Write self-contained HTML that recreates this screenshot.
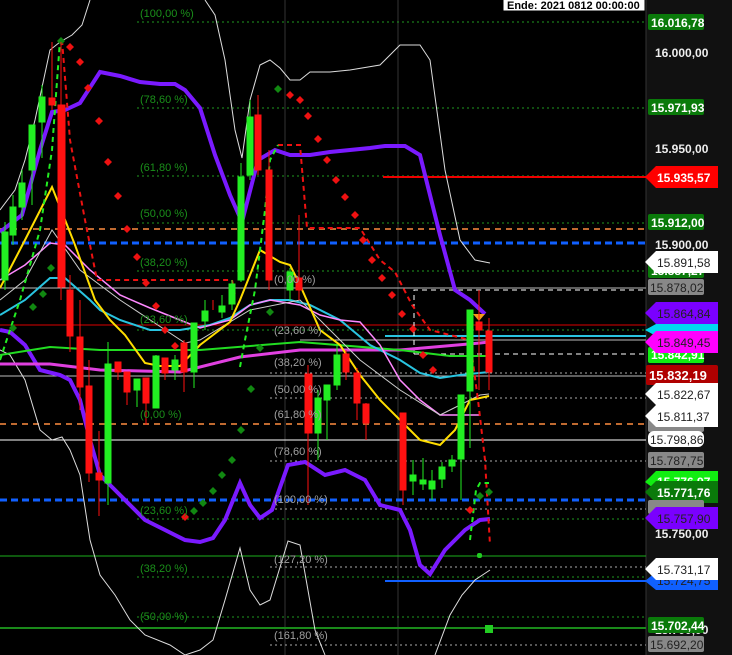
<!DOCTYPE html>
<html><head><meta charset="utf-8"><style>
html,body{margin:0;padding:0;background:#000;}
body{width:732px;height:655px;overflow:hidden;position:relative;font-family:"Liberation Sans",sans-serif;}
svg{position:absolute;left:0;top:0;}
</style></head><body>
<svg width="732" height="655" viewBox="0 0 732 655" xmlns="http://www.w3.org/2000/svg">
<rect x="0" y="0" width="732" height="655" fill="#000"/>
<rect x="646" y="0" width="86" height="655" fill="#111"/>
<line x1="646" y1="0" x2="646" y2="655" stroke="#333" stroke-width="1"/>
<line x1="285" y1="0" x2="285" y2="655" stroke="#333"/>
<line x1="398" y1="0" x2="398" y2="655" stroke="#333"/>

<g stroke-width="1" fill="none">
<g stroke="#1f9a1f" stroke-dasharray="2,3">
<line x1="137" y1="22" x2="646" y2="22"/>
<line x1="137" y1="108" x2="646" y2="108"/>
<line x1="137" y1="176" x2="646" y2="176"/>
<line x1="137" y1="223" x2="646" y2="223"/>
<line x1="137" y1="271" x2="646" y2="271"/>
<line x1="137" y1="330" x2="646" y2="330"/>
<line x1="137" y1="519" x2="646" y2="519"/>
<line x1="137" y1="577" x2="646" y2="577"/>
<line x1="137" y1="617" x2="646" y2="617"/>
</g>
<g stroke="#aaa" stroke-dasharray="2,3">
<line x1="270" y1="373" x2="646" y2="373"/>
<line x1="270" y1="398" x2="646" y2="398"/>
<line x1="270" y1="461" x2="646" y2="461"/>
<line x1="270" y1="509" x2="646" y2="509"/>
<line x1="270" y1="567" x2="646" y2="567"/>
<line x1="270" y1="645" x2="646" y2="645"/>
</g>
<line x1="383" y1="177" x2="646" y2="177" stroke="#e00" stroke-width="2"/>
<line x1="0" y1="229" x2="646" y2="229" stroke="#c06a30" stroke-width="2" stroke-dasharray="6,5"/>
<line x1="0" y1="424" x2="646" y2="424" stroke="#c06a30" stroke-width="2" stroke-dasharray="6,5"/>
<line x1="0" y1="243" x2="646" y2="243" stroke="#1060ff" stroke-width="3" stroke-dasharray="7,4"/>
<line x1="0" y1="500" x2="646" y2="500" stroke="#1060ff" stroke-width="3" stroke-dasharray="7,4"/>
<line x1="0" y1="288" x2="646" y2="288" stroke="#bbb"/>
<line x1="0" y1="325" x2="646" y2="325" stroke="#d00"/>
<line x1="385" y1="336" x2="646" y2="336" stroke="#29c4e0" stroke-width="2"/>
<line x1="300" y1="340" x2="646" y2="340" stroke="#bbb"/>
<line x1="0" y1="376" x2="646" y2="376" stroke="#bbb"/>
<line x1="0" y1="440" x2="646" y2="440" stroke="#fff"/>
<line x1="0" y1="556" x2="646" y2="556" stroke="#1cb01c"/>
<line x1="0" y1="628" x2="646" y2="628" stroke="#1a8a1a" stroke-width="2"/>
<line x1="385" y1="581" x2="646" y2="581" stroke="#1060ff" stroke-width="2"/>
<path d="M414 354 V290 H646 M414 354 H646" stroke="#fff" stroke-dasharray="5,4"/>
</g>

<g fill="none">
<polyline stroke="#ddd" stroke-width="1" points="0,210 15,190 25,160 35,120 50,50 60,42 72,35 82,25 90,0"/>
<polyline stroke="#ddd" stroke-width="1" points="205,0 215,15 225,60 235,130 242,158 250,100 260,65 270,60 280,68 290,80 300,80 310,72 330,72 350,70 380,65 400,45 420,45 430,60 445,170 460,240 475,260 490,263"/>
<polyline stroke="#ddd" stroke-width="1" points="0,350 10,355 25,380 40,430 52,440 62,437 70,450 80,475 90,540 100,575 115,595 130,620 145,635 170,645 185,655 200,650 213,640 225,600 240,548 250,590 260,605 270,600 288,541 300,545 315,630 325,655"/>
<polyline stroke="#ddd" stroke-width="1" points="435,655 450,615 462,595 475,580 490,570"/>
<polyline stroke="#7a1aff" stroke-width="4" points="0,232 22,215 40,150 52,112 65,110 80,103 100,72 120,76 140,82 160,84 175,84 185,90 200,108 215,155 230,195 242,222 258,160 275,150 290,155 310,155 330,152 350,150 370,148 385,146 405,146 420,155 440,235 455,290 470,300 485,314"/>
<polyline stroke="#7a1aff" stroke-width="4" points="0,330 10,332 25,345 40,370 60,375 70,380 80,400 90,440 100,475 115,490 130,505 145,520 165,530 185,540 200,542 213,538 225,520 240,483 250,505 260,518 272,510 288,465 305,462 325,475 345,470 365,480 380,505 400,510 410,530 420,565 430,574 445,550 465,530 480,520 490,519"/>
</g>

<g fill="none">
<polyline stroke="#e040e0" stroke-width="3" points="0,364 50,364 100,370 180,372 240,357 300,350 400,350 480,343 489,342"/>
<polyline stroke="#22dd22" stroke-width="2" points="0,355 50,347 100,350 200,350 300,342 400,350 450,356 489,356"/>
<polyline stroke="#29c4e0" stroke-width="2" points="0,315 25,300 50,278 65,278 90,300 100,310 120,320 150,330 180,330 210,325 230,318 250,305 270,300 290,300 310,305 340,320 370,345 400,360 420,373 440,378 460,375 489,372"/>
<polyline stroke="#ff88ff" stroke-width="1.5" points="0,280 25,265 50,243 65,245 90,270 120,295 150,308 180,320 200,328 230,320 250,305 270,300 300,305 320,315 340,320 360,322 380,345 400,380 420,400 440,415 460,415 480,415"/>
<polyline stroke="#ccc" stroke-width="1" points="0,300 25,280 52,230 80,270 120,300 185,343 200,340 250,310 300,300 330,330 360,360 400,390 440,415 460,405 480,395 489,394"/>
<polyline stroke="#ffdd00" stroke-width="2" points="0,288 25,240 52,187 75,245 95,300 110,320 125,335 145,363 160,366 180,366 200,345 230,322 240,300 260,250 280,262 290,265 300,285 320,330 340,345 360,375 380,400 400,420 420,440 440,445 455,430 470,400 480,398 489,396"/>
</g>

<g fill="none" stroke-width="2" stroke-dasharray="5,4">
<polyline stroke="#ee1111" points="62,40 70,140 85,220 97,280 232,280 235,295"/>
<polyline stroke="#ee1111" points="278,145 300,145 307,228 360,228 380,260 395,272 412,305 430,330 470,340 478,400 485,460 490,545"/>
<polyline stroke="#22ee22" points="0,360 10,330 20,300 40,230 52,150 60,40"/>
<polyline stroke="#22ee22" points="240,367 245,340 255,290 265,210 270,160 278,145"/>
<polyline stroke="#22ee22" points="470,540 476,490 480,483 489,483"/>
</g>
<g fill="#ee1111">
<path d="M70 43l4 4-4 4-4-4z M80 58l4 4-4 4-4-4z M88 84l4 4-4 4-4-4z M99 117l4 4-4 4-4-4z M108 158l4 4-4 4-4-4z M118 192l4 4-4 4-4-4z M127 225l4 4-4 4-4-4z M137 253l4 4-4 4-4-4z M146 279l4 4-4 4-4-4z M156 302l4 4-4 4-4-4z M165 326l4 4-4 4-4-4z M175 342l4 4-4 4-4-4z M185 513l4 4-4 4-4-4z"/>
<path d="M290 91l4 4-4 4-4-4z M300 96l4 4-4 4-4-4z M308 112l4 4-4 4-4-4z M318 135l4 4-4 4-4-4z M327 156l4 4-4 4-4-4z M336 176l4 4-4 4-4-4z M345 193l4 4-4 4-4-4z M355 211l4 4-4 4-4-4z M363 236l4 4-4 4-4-4z M372 256l4 4-4 4-4-4z M382 274l4 4-4 4-4-4z M392 291l4 4-4 4-4-4z M402 310l4 4-4 4-4-4z M413 325l4 4-4 4-4-4z M423 351l4 4-4 4-4-4z M433 366l4 4-4 4-4-4z M470 506l4 4-4 4-4-4z"/>
</g>
<g fill="#118811">
<path d="M61 37l4 4-4 4-4-4z M51 264l4 4-4 4-4-4z M43 290l4 4-4 4-4-4z M33 303l4 4-4 4-4-4z M13 324l4 4-4 4-4-4z M278 85l4 4-4 4-4-4z M270 308l4 4-4 4-4-4z M194 507l4 4-4 4-4-4z M203 499l4 4-4 4-4-4z M213 487l4 4-4 4-4-4z M222 471l4 4-4 4-4-4z M232 456l4 4-4 4-4-4z M241 426l4 4-4 4-4-4z M251 385l4 4-4 4-4-4z M260 344l4 4-4 4-4-4z M480 492l4 4-4 4-4-4z M489 488l4 4-4 4-4-4z"/>
</g>
<path d="M473 314h12l-6 7z" fill="#f59a1a"/>
<rect x="477" y="553" width="5" height="5" rx="2" fill="#22cc22"/>
<rect x="485" y="625" width="8" height="8" fill="#22cc22"/>

<g stroke-width="1">
<g fill="#22ee22" stroke="#22ee22">
<line x1="5" y1="222" x2="5" y2="290"/><rect x="2" y="232" width="6" height="48"/>
<line x1="13" y1="195" x2="13" y2="245"/><rect x="10" y="207" width="6" height="28"/>
<line x1="22" y1="170" x2="22" y2="220"/><rect x="19" y="183" width="6" height="24"/>
<line x1="32" y1="125" x2="32" y2="205"/><rect x="29" y="125" width="6" height="45"/>
<line x1="42" y1="85" x2="42" y2="158"/><rect x="39" y="97" width="6" height="25"/>
<line x1="108" y1="342" x2="108" y2="505"/><rect x="105" y="364" width="6" height="119"/>
<line x1="137" y1="379" x2="137" y2="407"/><rect x="134" y="379" width="6" height="11"/>
<line x1="156" y1="355" x2="156" y2="408"/><rect x="153" y="356" width="6" height="52"/>
<line x1="175" y1="355" x2="175" y2="380"/><rect x="172" y="360" width="6" height="10"/>
<line x1="194" y1="323" x2="194" y2="388"/><rect x="191" y="323" width="6" height="49"/>
<line x1="205" y1="300" x2="205" y2="330"/><rect x="202" y="311" width="6" height="10"/>
<line x1="222" y1="295" x2="222" y2="318"/><rect x="219" y="306" width="6" height="6"/>
<line x1="232" y1="280" x2="232" y2="310"/><rect x="229" y="284" width="6" height="20"/>
<line x1="241" y1="163" x2="241" y2="282"/><rect x="238" y="177" width="6" height="103"/>
<line x1="250" y1="100" x2="250" y2="180"/><rect x="247" y="117" width="6" height="58"/>
<line x1="290" y1="268" x2="290" y2="300"/><rect x="287" y="272" width="6" height="18"/>
<line x1="318" y1="390" x2="318" y2="460"/><rect x="315" y="398" width="6" height="35"/>
<line x1="327" y1="385" x2="327" y2="440"/><rect x="324" y="385" width="6" height="15"/>
<line x1="337" y1="345" x2="337" y2="390"/><rect x="334" y="355" width="6" height="30"/>
<line x1="413" y1="460" x2="413" y2="495"/><rect x="410" y="475" width="6" height="6"/>
<line x1="423" y1="458" x2="423" y2="490"/><rect x="420" y="480" width="6" height="4"/>
<line x1="432" y1="470" x2="432" y2="500"/><rect x="429" y="481" width="6" height="8"/>
<line x1="442" y1="462" x2="442" y2="488"/><rect x="439" y="467" width="6" height="12"/>
<line x1="452" y1="455" x2="452" y2="472"/><rect x="449" y="460" width="6" height="6"/>
<line x1="461" y1="395" x2="461" y2="500"/><rect x="458" y="395" width="6" height="64"/>
<line x1="470" y1="310" x2="470" y2="448"/><rect x="467" y="310" width="6" height="81"/>
</g>
<g fill="#ff1111" stroke="#ff1111">
<line x1="52" y1="42" x2="52" y2="110"/><rect x="49" y="98" width="6" height="7"/>
<line x1="61" y1="42" x2="61" y2="300"/><rect x="58" y="105" width="7" height="182"/>
<line x1="70" y1="275" x2="70" y2="352"/><rect x="67" y="290" width="6" height="46"/>
<line x1="80" y1="300" x2="80" y2="410"/><rect x="77" y="337" width="6" height="50"/>
<line x1="89" y1="360" x2="89" y2="482"/><rect x="86" y="386" width="6" height="87"/>
<line x1="99" y1="431" x2="99" y2="516"/><rect x="96" y="473" width="6" height="7"/>
<line x1="118" y1="362" x2="118" y2="380"/><rect x="115" y="362" width="6" height="10"/>
<line x1="127" y1="372" x2="127" y2="405"/><rect x="124" y="372" width="6" height="20"/>
<line x1="146" y1="378" x2="146" y2="425"/><rect x="143" y="378" width="6" height="25"/>
<line x1="165" y1="358" x2="165" y2="380"/><rect x="162" y="358" width="6" height="15"/>
<line x1="184" y1="340" x2="184" y2="392"/><rect x="181" y="343" width="6" height="29"/>
<line x1="213" y1="300" x2="213" y2="310"/>
<line x1="258" y1="95" x2="258" y2="175"/><rect x="255" y="115" width="6" height="55"/>
<line x1="269" y1="150" x2="269" y2="290"/><rect x="266" y="170" width="6" height="110"/>
<line x1="299" y1="215" x2="299" y2="300"/><rect x="296" y="278" width="6" height="12"/>
<line x1="308" y1="365" x2="308" y2="505"/><rect x="305" y="374" width="7" height="59"/>
<line x1="346" y1="350" x2="346" y2="380"/><rect x="343" y="354" width="6" height="18"/>
<line x1="357" y1="368" x2="357" y2="420"/><rect x="354" y="373" width="6" height="30"/>
<line x1="366" y1="403" x2="366" y2="440"/><rect x="363" y="404" width="6" height="19"/>
<line x1="403" y1="413" x2="403" y2="505"/><rect x="400" y="413" width="6" height="77"/>
<line x1="479" y1="290" x2="479" y2="390"/><rect x="476" y="322" width="6" height="8"/>
<line x1="489" y1="318" x2="489" y2="390"/><rect x="486" y="331" width="6" height="41"/>
</g>
</g>

<g font-size="11" fill="#1a8f1a" font-family="Liberation Sans,sans-serif">
<text x="140" y="17">(100,00 %)</text>
<text x="140" y="103">(78,60 %)</text>
<text x="140" y="171">(61,80 %)</text>
<text x="140" y="217">(50,00 %)</text>
<text x="140" y="266">(38,20 %)</text>
<text x="140" y="323">(23,60 %)</text>
<text x="140" y="418">(0,00 %)</text>
<text x="140" y="514">(23,60 %)</text>
<text x="140" y="572">(38,20 %)</text>
<text x="140" y="620">(50,00 %)</text>
</g>
<g font-size="11" fill="#a0a0a0" font-family="Liberation Sans,sans-serif">
<text x="274" y="283">(0,00 %)</text>
<text x="274" y="334">(23,60 %)</text>
<text x="274" y="366">(38,20 %)</text>
<text x="274" y="393">(50,00 %)</text>
<text x="274" y="418">(61,80 %)</text>
<text x="274" y="455">(78,60 %)</text>
<text x="274" y="503">(100,00 %)</text>
<text x="274" y="563">(127,20 %)</text>
<text x="274" y="639">(161,80 %)</text>
</g>

<rect x="503" y="-1" width="142" height="12" fill="#fff" stroke="#000"/>
<text x="507" y="9" font-size="11" font-weight="bold" fill="#000">Ende: 2021 0812 00:00:00</text>

<g font-size="12" font-weight="bold" font-family="Liberation Sans,sans-serif">
<text x="655" y="57" fill="#eee">16.000,00</text>
<text x="655" y="153" fill="#eee">15.950,00</text>
<text x="655" y="249" fill="#eee">15.900,00</text>
<text x="655" y="538" fill="#eee">15.750,00</text>
<text x="655" y="634" fill="#eee">15.700,00</text>

<rect x="648" y="14" width="56" height="16" rx="2" fill="#0a7a0a"/><text x="651" y="27" fill="#fff">16.016,78</text>
<rect x="648" y="99" width="56" height="16" rx="2" fill="#0a7a0a"/><text x="651" y="112" fill="#fff">15.971,93</text>
<rect x="648" y="214" width="56" height="16" rx="2" fill="#0a7a0a"/><text x="651" y="227" fill="#fff">15.912,00</text>
<rect x="648" y="262" width="56" height="16" rx="2" fill="#0a7a0a"/><text x="651" y="275" fill="#fff">15.887,27</text>
<rect x="648" y="279" width="56" height="16" rx="2" fill="#888"/><text x="650" y="292" fill="#222" font-weight="normal">15.878,02</text>
<path d="M645 177 L656 166 H718 V188 H656 Z" fill="#f00"/><text x="657" y="182" fill="#fff">15.935,57</text>
<path d="M645 262 L656 251 H718 V273 H656 Z" fill="#fff"/><text x="657" y="267" fill="#222" font-weight="normal">15.891,58</text>
<path d="M645 313 L656 302 H718 V324 H656 Z" fill="#7a00ff"/><text x="657" y="318" fill="#222" font-weight="normal">15.864,84</text>
<path d="M645 330 L656 324 H718 V336 H656 Z" fill="#00d8f0"/>
<rect x="648" y="347" width="56" height="16" rx="2" fill="#11ee11"/><text x="651" y="359" fill="#fff">15.842,91</text>
<path d="M645 342 L656 331 H718 V353 H656 Z" fill="#ff00ff"/><text x="657" y="347" fill="#222" font-weight="normal">15.849,45</text>
<rect x="646" y="365" width="72" height="20" rx="2" fill="#b00000"/><text x="649" y="380" fill="#fff" font-size="13">15.832,19</text>
<path d="M645 394 L656 383 H718 V405 H656 Z" fill="#fff"/><text x="657" y="399" fill="#222" font-weight="normal">15.822,67</text>
<rect x="648" y="418" width="56" height="14" rx="2" fill="#888"/>
<path d="M645 416 L656 405 H718 V427 H656 Z" fill="#fff"/><text x="657" y="421" fill="#222" font-weight="normal">15.811,37</text>
<rect x="648" y="431" width="56" height="16" rx="6" fill="#fff"/><text x="650" y="444" fill="#222" font-weight="normal">15.798,86</text>
<rect x="648" y="452" width="56" height="16" rx="2" fill="#888"/><text x="650" y="465" fill="#222" font-weight="normal">15.787,75</text>
<path d="M645 482 L656 471 H718 V490 H656 Z" fill="#11ee11"/><text x="657" y="486" fill="#fff">15.776,97</text>
<path d="M645 492 L656 481 H718 V503 H656 Z" fill="#0a7a0a"/><text x="657" y="497" fill="#fff">15.771,76</text>
<rect x="648" y="500" width="56" height="14" rx="2" fill="#888"/>
<path d="M645 518 L656 507 H718 V529 H656 Z" fill="#7a00ff"/><text x="657" y="523" fill="#222" font-weight="normal">15.757,90</text>
<path d="M645 581 L656 572 H718 V590 H656 Z" fill="#1060ff"/><text x="657" y="585" fill="#222" font-weight="normal">15.724,75</text>
<path d="M645 569 L656 558 H718 V580 H656 Z" fill="#fff"/><text x="657" y="574" fill="#222" font-weight="normal">15.731,17</text>
<rect x="648" y="617" width="56" height="16" rx="2" fill="#0a7a0a"/><text x="651" y="630" fill="#fff">15.702,44</text>
<rect x="648" y="636" width="56" height="16" rx="2" fill="#888"/><text x="650" y="649" fill="#222" font-weight="normal">15.692,20</text>
</g>
</svg>
</body></html>
